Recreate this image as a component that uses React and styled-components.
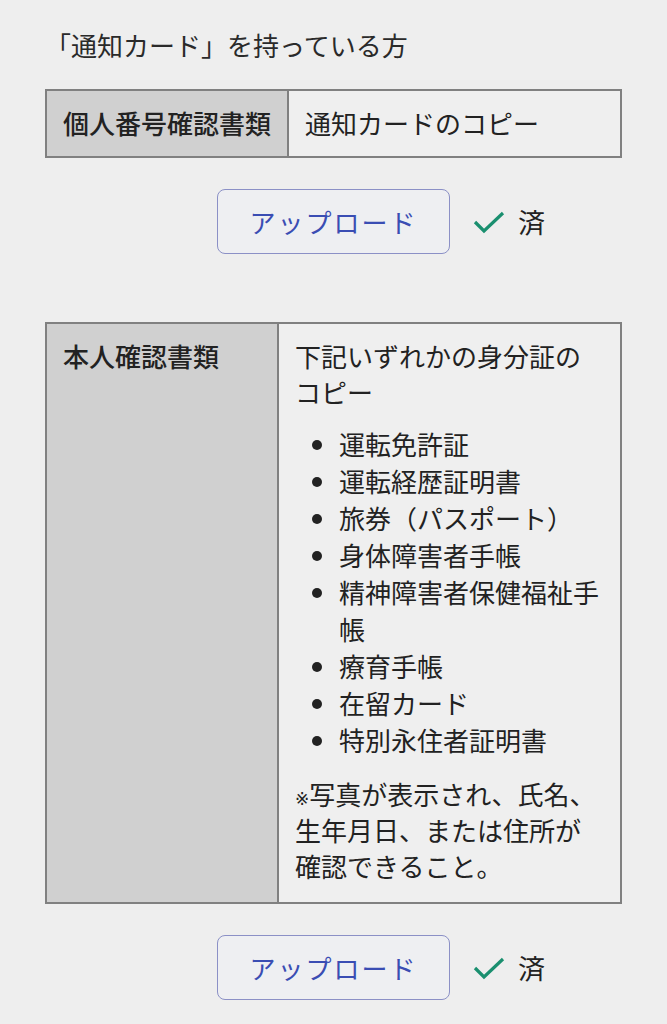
import React from "react";
import styled, { createGlobalStyle } from "styled-components";

const GlobalStyle = createGlobalStyle`
  body {
    margin: 0;
    background: #eeeeee;
    font-family: "Noto Sans CJK JP", "Noto Sans", sans-serif;
    color: #222;
  }
`;

const Page = styled.div`
  padding: 26px 45px 20px 45px;
  width: 577px;
`;

const Title = styled.h2`
  margin: 0 0 25px 0;
  font-size: 26px;
  line-height: 38px;
  font-weight: 400;
  color: #2a2a2a;
`;

const Table = styled.table`
  width: 100%;
  border-collapse: collapse;
  border: 2px solid #808080;
  font-size: 26px;
  line-height: 36px;
`;

const HeadCell = styled.th`
  width: ${(p) => p.$w}px;
  background: #d0d0d0;
  border: 2px solid #808080;
  padding: 14px 16px 15px 16px;
  text-align: left;
  vertical-align: top;
  font-weight: 500;
  white-space: nowrap;
  color: #222;
`;

const BodyCell = styled.td`
  background: #efefef;
  border: 2px solid #808080;
  padding: 14px 16px 15px 16px;
  vertical-align: top;
  color: #222;
`;

const Lead = styled.p`
  margin: 0 0 15px 0;
`;

const List = styled.ul`
  margin: 0 0 18px 0;
  padding-left: 44px;
  line-height: 37px;
`;

const Note = styled.p`
  margin: 0 0 3px 0;
  line-height: 36px;
`;

const Mark = styled.span`
  font-family: "DejaVu Sans", sans-serif;
  font-size: 17px;
  line-height: 1;
`;

const UploadRow = styled.div`
  display: grid;
  grid-template-columns: 1fr auto 1fr;
  align-items: center;
  margin: 31px 0 ${(p) => p.$after}px 0;
`;

const UploadButton = styled.button`
  grid-column: 2;
  width: 233px;
  height: 65px;
  border: 1px solid #8b90c6;
  border-radius: 8px;
  background: #eeeff2;
  color: #3a4db3;
  font-family: "Noto Sans CJK JP", sans-serif;
  font-size: 26px;
  letter-spacing: 2px;
  cursor: pointer;
`;

const Status = styled.div`
  display: flex;
  align-items: center;
  gap: 12px;
  padding-left: 22px;
  font-size: 27px;
  color: #222;
`;

function Check() {
  return (
    <svg width="34" height="26" viewBox="0 0 34 26">
      <path d="M3 13 L12 22 L31 4" fill="none" stroke="#1a8f6f" strokeWidth="3.2" />
    </svg>
  );
}

function Upload({ after }) {
  return (
    <UploadRow $after={after}>
      <UploadButton>アップロード</UploadButton>
      <Status>
        <Check />
        <span>済</span>
      </Status>
    </UploadRow>
  );
}

const idDocs = [
  "運転免許証",
  "運転経歴証明書",
  "旅券（パスポート）",
  "身体障害者手帳",
  "精神障害者保健福祉手帳",
  "療育手帳",
  "在留カード",
  "特別永住者証明書",
];

export default function App() {
  return (
    <Page>
      <GlobalStyle />
      <Title>「通知カード」を持っている方</Title>
      <Table>
        <tbody>
          <tr>
            <HeadCell $w={208}>個人番号確認書類</HeadCell>
            <BodyCell>通知カードのコピー</BodyCell>
          </tr>
        </tbody>
      </Table>
      <Upload after={68} />
      <Table>
        <tbody>
          <tr>
            <HeadCell $w={198}>本人確認書類</HeadCell>
            <BodyCell>
              <Lead>下記いずれかの身分証のコピー</Lead>
              <List>
                {idDocs.map((d) => (
                  <li key={d}>{d}</li>
                ))}
              </List>
              <Note>
                <Mark>※</Mark>写真が表示され、氏名、生年月日、または住所が確認できること。
              </Note>
            </BodyCell>
          </tr>
        </tbody>
      </Table>
      <Upload after={20} />
    </Page>
  );
}
